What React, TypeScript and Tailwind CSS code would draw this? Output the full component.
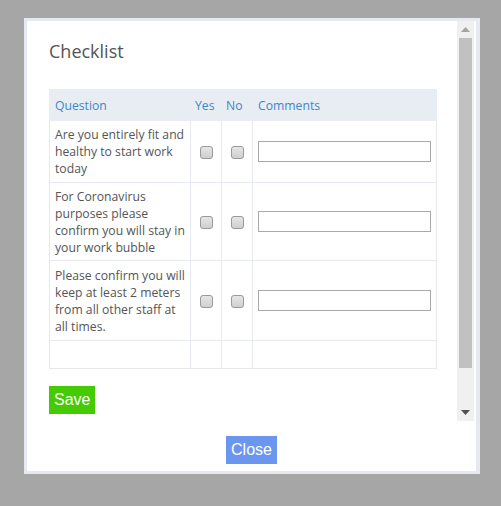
import React from 'react';

const questions = [
  { text: 'Are you entirely fit and healthy to start work today', h: 'h-[62px]' },
  { text: 'For Coronavirus purposes please confirm you will stay in your work bubble', h: 'h-[78px]' },
  { text: 'Please confirm you will keep at least 2 meters from all other staff at all times.', h: 'h-[80px]' },
];

const Box = () => (
  <span className="inline-block w-[13px] h-[13px] rounded-[3px] border border-[#9a9a9a] bg-gradient-to-b from-[#e6e6e6] to-[#cfcfcf] align-middle" />
);

const Scrollbar = () => (
  <div className="w-[17px] h-full bg-[#f0f0f0] flex flex-col items-center">
    <div className="h-[17px] w-full flex items-center justify-center">
      <svg width="9" height="5" viewBox="0 0 9 5"><path d="M4.5 0 L9 5 L0 5 Z" fill="#a3a3a3" /></svg>
    </div>
    <div className="w-[13px] h-[330px] bg-[#c1c1c1]" />
    <div className="flex-1" />
    <div className="h-[17px] w-full flex items-center justify-center">
      <svg width="9" height="5" viewBox="0 0 9 5"><path d="M0 0 L9 0 L4.5 5 Z" fill="#505050" /></svg>
    </div>
  </div>
);

export default function App() {
  return (
    <div className="w-[501px] h-[506px] bg-[#a6a6a6] pt-[18px] pl-[24px]" style={{ fontFamily: '"Open Sans", sans-serif' }}>
      <div className="w-[456px] h-[456px] border-t-[3px] border-l-[3px] border-b-[3px] border-r-[4px] border-[#e6eaf0] bg-white flex flex-col">
        <div className="flex h-[400px]">
          <div className="flex-1 pl-[22px] pr-[20px] overflow-hidden">
            <h2 className="text-[18px] text-[#555] leading-[26px] mt-[17px] mb-[25px]">Checklist</h2>
            <table className="table-fixed border-collapse w-[388px] text-[12.2px] leading-[17px] text-[#555]">
              <colgroup>
                <col className="w-[141px]" />
                <col className="w-[31px]" />
                <col className="w-[31px]" />
                <col />
              </colgroup>
              <thead>
                <tr className="bg-[#e8edf4] h-[31px]">
                  <th className="text-left font-normal text-[#3f86c6] px-[5px] border border-[#e8edf4]">Question</th>
                  <th className="text-left font-normal text-[#3f86c6] px-[4px] border border-[#e8edf4]">Yes</th>
                  <th className="text-left font-normal text-[#3f86c6] px-[4px] border border-[#e8edf4]">No</th>
                  <th className="text-left font-normal text-[#3f86c6] px-[5px] border border-[#e8edf4]">Comments</th>
                </tr>
              </thead>
              <tbody>
                {questions.map((q) => (
                  <tr key={q.text} className={q.h}>
                    <td className="border border-[#e6eaf0] pl-[5px] pr-[3px] py-[4px] align-middle">{q.text}</td>
                    <td className="border border-[#e6eaf0] text-center align-middle"><Box /></td>
                    <td className="border border-[#e6eaf0] text-center align-middle"><Box /></td>
                    <td className="border border-[#e6eaf0] px-[5px] align-middle">
                      <input className="w-[173px] h-[21px] border border-[#a9a9a9] bg-white block outline-none" />
                    </td>
                  </tr>
                ))}
                <tr className="h-[28px]">
                  <td className="border border-[#e6eaf0]" />
                  <td className="border border-[#e6eaf0]" />
                  <td className="border border-[#e6eaf0]" />
                  <td className="border border-[#e6eaf0]" />
                </tr>
              </tbody>
            </table>
            <button className="mt-[17px] h-[28px] px-[5px] bg-[#44cc00] text-white text-[16px]" style={{ fontFamily: '"Liberation Sans", Arial, sans-serif' }}>
              Save
            </button>
          </div>
          <Scrollbar />
          <div className="w-[2px]" />
        </div>
        <div className="flex justify-center mt-[15px]">
          <button className="h-[28px] px-[5px] bg-[#6b96f0] text-white text-[16px]" style={{ fontFamily: '"Liberation Sans", Arial, sans-serif' }}>
            Close
          </button>
        </div>
      </div>
    </div>
  );
}
